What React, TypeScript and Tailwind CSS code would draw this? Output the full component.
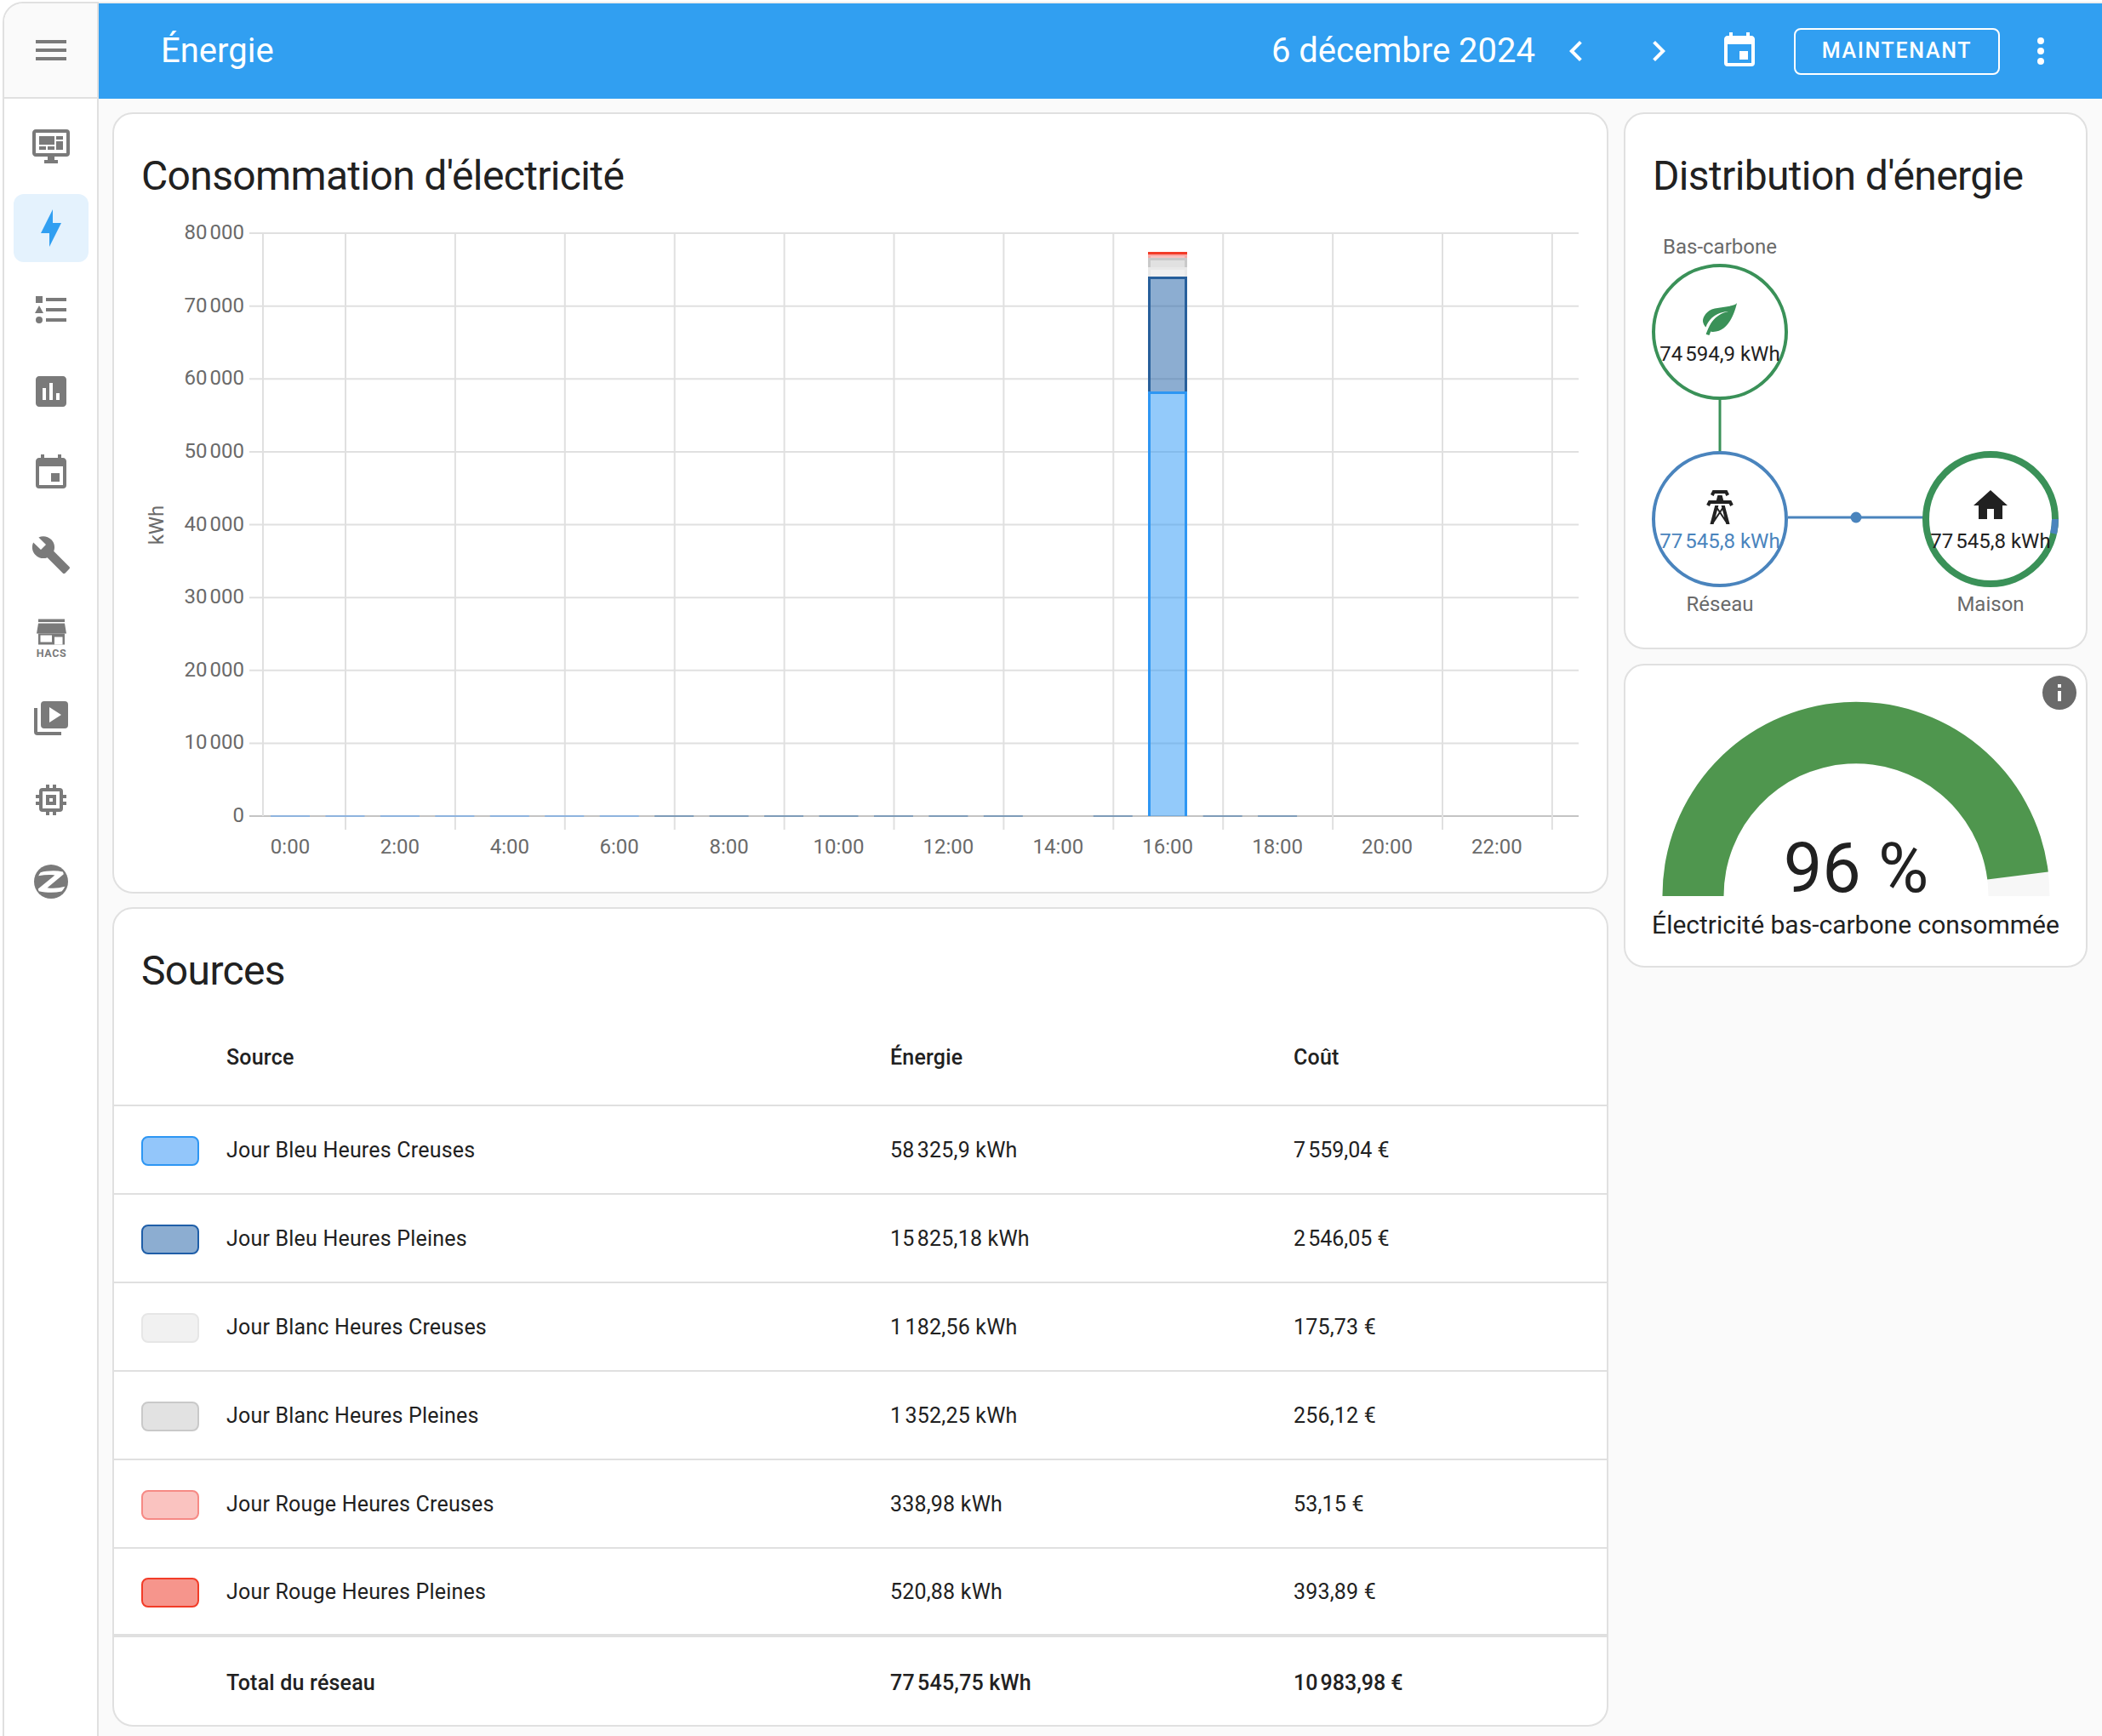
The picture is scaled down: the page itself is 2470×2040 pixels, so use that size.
import React from "react";

const P = {
  menu: "M3,6H21V8H3V6M3,11H21V13H3V11M3,16H21V18H3V16Z",
  monitor: "M21,16V4H3V16H21M21,2A2,2 0 0,1 23,4V16A2,2 0 0,1 21,18H14V20H16V22H8V20H10V18H3C1.89,18 1,17.1 1,16V4C1,2.89 1.89,2 3,2H21M5,6H14V11H5V6M15,6H19V8H15V6M19,9V14H15V9H19M5,12H9V14H5V12M10,12H14V14H10V12Z",
  bolt: "M11,15H6L13,1V9H18L11,23V15Z",
  list: "M5,9.5L7.5,14H2.5L5,9.5M3,4H7V8H3V4M5,20A2,2 0 0,0 7,18A2,2 0 0,0 5,16A2,2 0 0,0 3,18A2,2 0 0,0 5,20M9,5V7H21V5H9M9,19H21V17H9V19M9,13H21V11H9V13Z",
  chart: "M19 3H5C3.9 3 3 3.9 3 5V19C3 20.1 3.9 21 5 21H19C20.1 21 21 20.1 21 19V5C21 3.9 20.1 3 19 3M9 17H7V10H9V17M13 17H11V7H13V17M17 17H15V13H17V17Z",
  calendar: "M19,19H5V8H19M16,1V3H8V1H6V3H5C3.89,3 3,3.89 3,5V19A2,2 0 0,0 5,21H19A2,2 0 0,0 21,19V5C21,3.89 20.1,3 19,3H18V1M17,12H12V17H17V12Z",
  wrench: "M22.7,19L13.6,9.9C14.5,7.6 14,4.9 12.1,3C10.1,1 7.1,0.6 4.7,1.7L9,6L6,9L1.6,4.7C0.4,7.1 0.9,10.1 2.9,12.1C4.8,14 7.5,14.5 9.8,13.6L18.9,22.7C19.3,23.1 19.9,23.1 20.3,22.7L22.6,20.4C23.1,20 23.1,19.3 22.7,19Z",
  play: "M4,6H2V20A2,2 0 0,0 4,22H18V20H4M20,2H8A2,2 0 0,0 6,4V16A2,2 0 0,0 8,18H20A2,2 0 0,0 22,16V4A2,2 0 0,0 20,2M11,14.5V5.5L18,10L11,14.5Z",
  chip: "M9,3V5H7A2,2 0 0,0 5,7V9H3V11H5V13H3V15H5V17A2,2 0 0,0 7,19H9V21H11V19H13V21H15V19H17A2,2 0 0,0 19,17V15H21V13H19V11H21V9H19V7A2,2 0 0,0 17,5H15V3H13V5H11V3M7,7H17V17H7M9,9V15H15V9M11,11H13V13H11Z",
  tower: "M8.28,5.45L6.5,4.55L7.76,2H16.23L17.5,4.55L15.72,5.44L15,4H9L8.28,5.45M18.62,8H14.09L13.3,5H10.7L9.91,8H5.38L4.1,10.55L5.89,11.44L6.62,10H17.38L18.1,11.45L19.89,10.56L18.62,8M17.77,22H15.7L15.46,21.1L12,15.9L8.53,21.1L8.3,22H6.23L9.12,11H11.19L10.83,12.35L12,14.1L13.16,12.35L12.81,11H14.88L17.77,22M11.4,15L10.5,13.65L9.32,18.13L11.4,15M14.68,18.12L13.5,13.64L12.6,15L14.68,18.12Z",
  leaf: "M17,8C8,10 5.9,16.17 3.82,21.34L5.71,22L6.66,19.7C7.14,19.87 7.64,20 8,20C19,20 22,3 22,3C21,5 14,5.25 9,6.25C4,7.25 2,11.5 2,13.5C2,15.5 3.75,17.25 3.75,17.25C7,8 17,8 17,8Z",
  home: "M10,20V14H14V20H19V12H22L12,3L2,12H5V20H10Z",
  left: "M15.41,16.58L10.83,12L15.41,7.41L14,6L8,12L14,18L15.41,16.58Z",
  right: "M8.59,16.58L13.17,12L8.59,7.41L10,6L16,12L10,18L8.59,16.58Z",
  dots: "M12,16A2,2 0 0,1 14,18A2,2 0 0,1 12,20A2,2 0 0,1 10,18A2,2 0 0,1 12,16M12,10A2,2 0 0,1 14,12A2,2 0 0,1 12,14A2,2 0 0,1 10,12A2,2 0 0,1 12,10M12,4A2,2 0 0,1 14,6A2,2 0 0,1 12,8A2,2 0 0,1 10,6A2,2 0 0,1 12,4Z",
  info: "M13,9H11V7H13M13,17H11V11H13M12,2A10,10 0 0,0 2,12A10,10 0 0,0 12,22A10,10 0 0,0 22,12A10,10 0 0,0 12,2Z",
};

function Icon({ d, className }: { d: string; className?: string }) {
  return (
    <svg viewBox="0 0 24 24" className={className} fill="currentColor">
      <path d={d} fillRule="evenodd" />
    </svg>
  );
}

function Hacs() {
  return (
    <svg viewBox="0 0 48 48" className="w-12 h-12 text-[#7a7a7a] overflow-visible" fill="currentColor">
      <rect x="9" y="3.5" width="31" height="3.5" />
      <path d="M9 8.5H40L42 20.5H7Z" />
      <rect x="9" y="20.5" width="31" height="13" />
      <rect x="11.5" y="22.5" width="13.5" height="8" fill="#fff" />
      <rect x="28" y="24.5" width="9.5" height="9" fill="#fff" />
      <text x="24.5" y="47.5" fontSize="12.5" fontWeight="700" textAnchor="middle" letterSpacing="0.6">HACS</text>
    </svg>
  );
}

function Zigbee() {
  return (
    <svg viewBox="0 0 24 24" className="w-12 h-12 text-[#7a7a7a]" fill="currentColor">
      <circle cx="12" cy="12" r="10" />
      <path d="M5.8 6.6C9.5 5.6 14.5 5.3 19 6.2L19.4 7.6L9.8 15.6C13 16.1 16.5 15.9 20.2 14.9C19.6 16 19 17 18.2 17.8C13.8 18.7 9.5 18.6 4.8 17.6L4.4 16.2L14.2 8.2C11.2 7.8 8 8 4.6 8.6C4.9 7.9 5.3 7.2 5.8 6.6Z" fill="#fff" />
    </svg>
  );
}

const NavIcons = [P.monitor, P.bolt, P.list, P.chart, P.calendar, P.wrench, "hacs", P.play, P.chip, "zigbee"];

function Sidebar() {
  return (
    <aside className="w-[113px] shrink-0 h-[2038px] bg-white border-l-2 border-t-2 border-r-2 border-[#e0e0e0] rounded-tl-[24px] overflow-hidden flex flex-col">
      <div className="h-[112px] shrink-0 bg-[#fafafa] border-b-2 border-[#e0e0e0] flex items-center justify-center">
        <Icon d={P.menu} className="w-12 h-12 text-[#7a7a7a]" />
      </div>
      <nav className="pt-2 flex flex-col">
        {NavIcons.map((d, i) => (
          <div key={i} className="h-[96px] flex items-center justify-center">
            <div className={"w-[88px] h-[80px] rounded-[12px] flex items-center justify-center " + (i === 1 ? "bg-[#e4f2fd]" : "")}>
              {d === "hacs" ? <Hacs /> : d === "zigbee" ? <Zigbee /> : <Icon d={d} className={"w-12 h-12 " + (i === 1 ? "text-[#319ff1]" : "text-[#7a7a7a]")} />}
            </div>
          </div>
        ))}
      </nav>
    </aside>
  );
}

function Header() {
  return (
    <header className="h-[112px] bg-[#319ff1] text-white flex items-center pl-[73px]">
      <h1 className="text-[40px] font-normal flex-1">Énergie</h1>
      <span className="text-[40px] mr-[24px]">6 décembre 2024</span>
      <Icon d={P.left} className="w-12 h-12" />
      <Icon d={P.right} className="w-12 h-12 ml-[49px]" />
      <Icon d={P.calendar} className="w-12 h-12 ml-[47px]" />
      <button className="ml-[40px] w-[242px] h-[55px] rounded-[8px] border-2 border-white text-[25px] font-medium tracking-[1.7px] flex items-center justify-center">MAINTENANT</button>
      <Icon d={P.dots} className="w-12 h-12 ml-[24px] mr-[48px]" />
    </header>
  );
}

const cardCls = "bg-white border-2 border-[#e0e0e0] rounded-[24px] overflow-hidden";
const titleCls = "text-[48px] leading-[64px] font-normal text-[#212121] tracking-[-0.65px] pl-[32px] pt-[41px]";

const yTicks = [80, 70, 60, 50, 40, 30, 20, 10, 0];
const yPos = (v: number) => 959 - v * 8.5625;
const vLines = Array.from({ length: 12 }, (_, i) => 406 + i * 128.9);
const hours = [0, 1, 2, 3, 4, 5, 6, 7, 8, 9, 10, 11, 12, 13, 15, 17, 18];

function Chart() {
  const bar = (y1: number, y2: number, fill: string, stroke: string, sw = 3) => (
    <g>
      <rect x="1349" y={y1} width="46" height={y2 - y1} fill={fill} fillOpacity="0.5" />
      <path d={`M1350.5 ${y2}V${y1 + sw / 2}H1393.5V${y2}`} fill="none" stroke={stroke} strokeWidth={sw} />
    </g>
  );
  return (
    <svg viewBox="134 250 1754 797" className="block w-[1754px] h-[797px]">
      {yTicks.map((v) => (
        <line key={v} x1="293" x2="1855" y1={yPos(v)} y2={yPos(v)} stroke={v === 0 ? "#c4c4c4" : "#e0e0e0"} strokeWidth="2" />
      ))}
      <line x1="309" x2="309" y1="274" y2="959" stroke="#e0e0e0" strokeWidth="2" />
      {vLines.map((x) => (
        <line key={x} x1={x} x2={x} y1="274" y2="975" stroke="#e0e0e0" strokeWidth="2" />
      ))}
      {hours.map((h) => (
        <rect key={h} x={318 + h * 64.45} y="958" width="46" height="2" fill={h < 7 ? "#8fb4de" : "#7f9cb8"} />
      ))}
      {bar(460, 959, "#2896f5", "#2d96f3")}
      {bar(325, 460, "#195ba3", "#275f9b")}
      {bar(314, 325, "#e2e2e2", "#e8e8e8")}
      {bar(303, 314, "#c4c4c4", "#c9c9c9")}
      {bar(298, 303, "#f68a85", "#f9a8a4")}
      {bar(296, 299, "#f23c28", "#f23c28")}
      {yTicks.map((v) => (
        <text key={v} x="287" y={yPos(v) + 7} textAnchor="end" fontSize="24" fill="#6a6a6a">
          {v === 0 ? "0" : `${v}\u202f000`}
        </text>
      ))}
      {Array.from({ length: 12 }, (_, i) => (
        <text key={i} x={341 + i * 128.9} y="1002.5" textAnchor="middle" fontSize="24" fill="#6a6a6a">{`${i * 2}:00`}</text>
      ))}
      <text transform="translate(192 617) rotate(-90)" textAnchor="middle" fontSize="24" fill="#6a6a6a">kWh</text>
    </svg>
  );
}

const rows = [
  ["Jour Bleu Heures Creuses", "58\u202f325,9 kWh", "7\u202f559,04 €", "bg-[#93c6fa] border-[#2d96f3]"],
  ["Jour Bleu Heures Pleines", "15\u202f825,18 kWh", "2\u202f546,05 €", "bg-[#8cadd1] border-[#1f5ea8]"],
  ["Jour Blanc Heures Creuses", "1\u202f182,56 kWh", "175,73 €", "bg-[#f1f1f1] border-[#e6e6e6]"],
  ["Jour Blanc Heures Pleines", "1\u202f352,25 kWh", "256,12 €", "bg-[#e2e2e2] border-[#c9c9c9]"],
  ["Jour Rouge Heures Creuses", "338,98 kWh", "53,15 €", "bg-[#fac3c0] border-[#f68a85]"],
  ["Jour Rouge Heures Pleines", "520,88 kWh", "393,89 €", "bg-[#f6958c] border-[#f23c28]"],
];
const gridCols = "grid grid-cols-[132px_780px_474px_1fr] items-center text-[25px] tracking-[0.2px] text-[#212121]";

function Sources() {
  return (
    <section className={cardCls + " h-[963px]"}>
      <h2 className={titleCls}>Sources</h2>
      <div className={gridCols + " h-[127px] pt-[52px] border-b-2 border-[#e0e0e0] font-medium items-start"}>
        <span />
        <span className="leading-[36px]">Source</span>
        <span className="leading-[36px]">Énergie</span>
        <span className="leading-[36px]">Coût</span>
      </div>
      {rows.map((r, i) => (
        <div key={r[0]} className={gridCols + " h-[104px] pt-[2px] " + (i === 5 ? "border-b-4" : "border-b-2") + " border-[#e0e0e0]"}>
          <span className="pl-[32px]">
            <span className={"block w-[68px] h-[35px] rounded-[8px] border-2 " + r[3]} />
          </span>
          <span>{r[0]}</span>
          <span>{r[1]}</span>
          <span>{r[2]}</span>
        </div>
      ))}
      <div className={gridCols + " h-[104px] pt-[4px] font-medium"}>
        <span />
        <span>Total du réseau</span>
        <span>{"77\u202f545,75 kWh"}</span>
        <span>{"10\u202f983,98 €"}</span>
      </div>
    </section>
  );
}

function Node({ cls, icon, iconCls, value, valueCls, ring }: { cls: string; icon: string; iconCls: string; value: string; valueCls: string; ring?: boolean }) {
  return (
    <div className={"absolute w-[160px] h-[160px] rounded-full flex flex-col items-center justify-start " + cls}>
      {ring && (
        <svg viewBox="0 0 160 160" className="absolute inset-0 w-[160px] h-[160px]">
          <circle cx="80" cy="80" r="76" fill="none" stroke="#3a9158" strokeWidth="8" />
          <path d="M156 80A76 76 0 0 1 154 97" fill="none" stroke="#4a84bd" strokeWidth="8" />
        </svg>
      )}
      <Icon d={icon} className={"w-12 h-12 shrink-0 " + iconCls} />
      <span className={"text-[24px] leading-[32px] whitespace-nowrap relative " + valueCls}>{value}</span>
    </div>
  );
}

function Distribution() {
  return (
    <section className={cardCls + " h-[631px]"}>
      <h2 className={titleCls}>Distribution d'énergie</h2>
      <div className="relative h-[500px] mt-[11px] text-[24px] text-[#6a6a6a]">
        <svg viewBox="0 0 541 441" className="absolute left-0 top-0 w-[541px] h-[441px]">
          <line x1="111" x2="111" y1="220" y2="280" stroke="#3a9158" strokeWidth="3" />
          <line x1="191" x2="350" y1="358" y2="358" stroke="#4a84bd" strokeWidth="3" />
          <circle cx="271" cy="358" r="6.5" fill="#4a84bd" />
        </svg>
        <span className="absolute left-[31px] w-[160px] top-[24px] text-center leading-[32px] whitespace-nowrap">Bas-carbone</span>
        <Node cls="left-[31px] top-[60px] pt-[36px] border-4 border-[#3a9158]" icon={P.leaf} iconCls="text-[#3a9158]" value={"74\u202f594,9 kWh"} valueCls="text-[#212121] mt-[2px]" />
        <Node cls="left-[31px] top-[280px] pt-[38px] border-4 border-[#4a84bd]" icon={P.tower} iconCls="text-[#212121]" value={"77\u202f545,8 kWh"} valueCls="text-[#4a84bd]" />
        <Node ring cls="left-[349px] top-[280px] pt-[40px]" icon={P.home} iconCls="text-[#212121] relative" value={"77\u202f545,8 kWh"} valueCls="text-[#212121] mt-[2px]" />
        <span className="absolute left-[31px] w-[160px] top-[444px] text-center leading-[32px]">Réseau</span>
        <span className="absolute left-[349px] w-[160px] top-[444px] text-center leading-[32px]">Maison</span>
      </div>
    </section>
  );
}

function Gauge() {
  return (
    <section className={cardCls + " h-[357px] relative flex flex-col items-center"}>
      <Icon d={P.info} className="absolute right-[7px] top-[8px] w-12 h-12 text-[#6a6a6a]" />
      <svg viewBox="0 0 460 250" className="block w-[460px] h-[250px] mt-[41px] shrink-0">
        <path d="M2.5 230A227.5 227.5 0 0 1 457.5 230H385.5A155.5 155.5 0 0 0 74.5 230Z" fill="#f7f7f7" />
        <path d="M2.5 230A227.5 227.5 0 0 1 455.8 201.5L384.3 210.5A155.5 155.5 0 0 0 74.5 230Z" fill="#4f964e" />
        <text x="230" y="225" textAnchor="middle" fontSize="81" fill="#212121">96 %</text>
      </svg>
      <div className="text-[30px] leading-[44px] text-[#212121] -mt-[8px] whitespace-nowrap">Électricité bas-carbone consommée</div>
    </section>
  );
}

export default function App() {
  return (
    <div className="w-[2470px] h-[2040px] overflow-hidden bg-white pt-[2px] pl-[3px] flex font-['Roboto',sans-serif]">
      <Sidebar />
      <div className="flex-1 flex flex-col border-t-2 border-[#efefef]">
        <Header />
        <main className="flex-1 bg-[#fafafa] pl-[16px] pt-[16px]">
          <div className="grid grid-cols-[1758px_545px] gap-x-[18px] items-start">
            <div className="flex flex-col gap-[16px]">
              <section className={cardCls + " h-[918px]"}>
                <h2 className={titleCls}>Consommation d'électricité</h2>
                <div className="mt-[11px]"><Chart /></div>
              </section>
              <Sources />
            </div>
            <div className="flex flex-col gap-[17px]">
              <Distribution />
              <Gauge />
            </div>
          </div>
        </main>
      </div>
    </div>
  );
}
